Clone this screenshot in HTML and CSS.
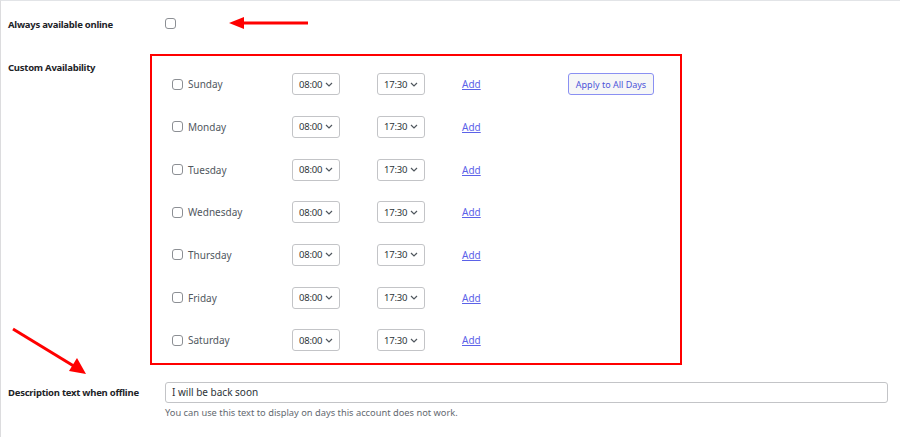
FILE: index.html
```html
<!DOCTYPE html>
<html lang="en">
<head>
    <meta charset="UTF-8">
    <title>Availability settings</title>
    <link rel="stylesheet" href="styles.css">
</head>
<body>
    <div class="panel">
        <div class="field field-online">
            <div class="label">Always available online</div>
            <div class="value"><span class="check"></span></div>
        </div>

        <div class="field field-custom">
            <div class="label">Custom Availability</div>
            <div class="value">
                <div class="days">
                    <div class="day">
                        <div class="day-name"><span class="check"></span>Sunday</div>
                        <div class="select"><span>08:00</span><svg width="8" height="5" viewBox="0 0 8 5"><path d="M1 1l3 3 3-3" fill="none" stroke="#50575e" stroke-width="1.2"/></svg></div>
                        <div class="select"><span>17:30</span><svg width="8" height="5" viewBox="0 0 8 5"><path d="M1 1l3 3 3-3" fill="none" stroke="#50575e" stroke-width="1.2"/></svg></div>
                        <div><a href="#" class="add">Add</a></div>
                        <div><button class="apply">Apply to All Days</button></div>
                    </div>
                    <div class="day">
                        <div class="day-name"><span class="check"></span>Monday</div>
                        <div class="select"><span>08:00</span><svg width="8" height="5" viewBox="0 0 8 5"><path d="M1 1l3 3 3-3" fill="none" stroke="#50575e" stroke-width="1.2"/></svg></div>
                        <div class="select"><span>17:30</span><svg width="8" height="5" viewBox="0 0 8 5"><path d="M1 1l3 3 3-3" fill="none" stroke="#50575e" stroke-width="1.2"/></svg></div>
                        <div><a href="#" class="add">Add</a></div>
                    </div>
                    <div class="day">
                        <div class="day-name"><span class="check"></span>Tuesday</div>
                        <div class="select"><span>08:00</span><svg width="8" height="5" viewBox="0 0 8 5"><path d="M1 1l3 3 3-3" fill="none" stroke="#50575e" stroke-width="1.2"/></svg></div>
                        <div class="select"><span>17:30</span><svg width="8" height="5" viewBox="0 0 8 5"><path d="M1 1l3 3 3-3" fill="none" stroke="#50575e" stroke-width="1.2"/></svg></div>
                        <div><a href="#" class="add">Add</a></div>
                    </div>
                    <div class="day">
                        <div class="day-name"><span class="check"></span>Wednesday</div>
                        <div class="select"><span>08:00</span><svg width="8" height="5" viewBox="0 0 8 5"><path d="M1 1l3 3 3-3" fill="none" stroke="#50575e" stroke-width="1.2"/></svg></div>
                        <div class="select"><span>17:30</span><svg width="8" height="5" viewBox="0 0 8 5"><path d="M1 1l3 3 3-3" fill="none" stroke="#50575e" stroke-width="1.2"/></svg></div>
                        <div><a href="#" class="add">Add</a></div>
                    </div>
                    <div class="day">
                        <div class="day-name"><span class="check"></span>Thursday</div>
                        <div class="select"><span>08:00</span><svg width="8" height="5" viewBox="0 0 8 5"><path d="M1 1l3 3 3-3" fill="none" stroke="#50575e" stroke-width="1.2"/></svg></div>
                        <div class="select"><span>17:30</span><svg width="8" height="5" viewBox="0 0 8 5"><path d="M1 1l3 3 3-3" fill="none" stroke="#50575e" stroke-width="1.2"/></svg></div>
                        <div><a href="#" class="add">Add</a></div>
                    </div>
                    <div class="day">
                        <div class="day-name"><span class="check"></span>Friday</div>
                        <div class="select"><span>08:00</span><svg width="8" height="5" viewBox="0 0 8 5"><path d="M1 1l3 3 3-3" fill="none" stroke="#50575e" stroke-width="1.2"/></svg></div>
                        <div class="select"><span>17:30</span><svg width="8" height="5" viewBox="0 0 8 5"><path d="M1 1l3 3 3-3" fill="none" stroke="#50575e" stroke-width="1.2"/></svg></div>
                        <div><a href="#" class="add">Add</a></div>
                    </div>
                    <div class="day">
                        <div class="day-name"><span class="check"></span>Saturday</div>
                        <div class="select"><span>08:00</span><svg width="8" height="5" viewBox="0 0 8 5"><path d="M1 1l3 3 3-3" fill="none" stroke="#50575e" stroke-width="1.2"/></svg></div>
                        <div class="select"><span>17:30</span><svg width="8" height="5" viewBox="0 0 8 5"><path d="M1 1l3 3 3-3" fill="none" stroke="#50575e" stroke-width="1.2"/></svg></div>
                        <div><a href="#" class="add">Add</a></div>
                    </div>
                </div>
            </div>
        </div>

        <div class="field field-offline">
            <div class="label">Description text when offline</div>
            <div class="value">
                <div class="text-input">I will be back soon</div>
                <p class="help">You can use this text to display on days this account does not work.</p>
            </div>
        </div>

        <!-- annotation arrows -->
        <svg class="arrow arrow-top" width="82" height="20" viewBox="0 0 82 20">
            <line x1="12" y1="10" x2="79" y2="10" stroke="#f00" stroke-width="3"/>
            <polygon points="0,10 15,4 15,16" fill="#f00"/>
        </svg>
        <svg class="arrow arrow-bottom" width="90" height="60" viewBox="0 0 90 60">
            <line x1="2" y1="2" x2="66" y2="41" stroke="#f00" stroke-width="3"/>
            <polygon points="75,47 58,44 66,31" fill="#f00"/>
        </svg>
    </div>
</body>
</html>
```

FILE: styles.css
```css
* { box-sizing: border-box; }
body { margin: 0; background: #fff; font-family: "Noto Sans", "Open Sans", sans-serif; font-size: 10px; color: #2c3338; }
.panel { position: relative; height: 437px; border-top: 1px solid #e2e4e7; border-left: 1px solid #dcdcde; padding-left: 7px; }

.field { display: flex; }
.label { width: 157px; flex-shrink: 0; font-weight: 700; font-size: 9.5px; letter-spacing: -0.25px; color: #1d2327; line-height: 14px; }
.value { flex: 1; }

.field-online { height: 48px; align-items: center; }
.field-custom { margin-top: 5px; }
.field-custom .label { padding-top: 7px; }
.field-offline { margin-top: 17px; }
.field-offline .label { padding-top: 4px; }

.check { display: inline-block; width: 11px; height: 11px; border: 1px solid #8c8f94; border-radius: 3px; background: #fff; }

.days { margin-left: -15px; width: 532px; height: 311px; border: 2px solid #f00; padding: 7px 0 0 20px; }
.day { display: grid; grid-template-columns: 120px 85px 85px 106px auto; align-items: center; height: 42.67px; }
.day-name { display: flex; align-items: center; gap: 5px; color: #50575e; }

.select { display: flex; align-items: center; justify-content: space-between; width: 48px; height: 22px; padding: 0 6px 0 6px; border: 1px solid #c3c4c7; border-radius: 3px; color: #2c3338; font-size: 9.5px; letter-spacing: -0.2px; }

.add { color: #5b62e8; text-decoration: underline; margin-top: -3px; }

.apply { width: 86px; height: 22px; padding: 0; border: 1px solid #8a90f2; border-radius: 3px; background: #f6f7f7; color: #4d55d9; font-family: inherit; font-size: 9px; }

.text-input { width: 723px; height: 21px; border: 1px solid #c3c4c7; border-radius: 3px; padding: 0 6px; line-height: 19px; color: #2c3338; }
.help { margin: 3px 0 0; line-height: 14px; font-size: 9.3px; color: #646970; }

.arrow { position: absolute; }
.arrow-top { left: 228px; top: 12px; }
.arrow-bottom { left: 10px; top: 326px; }
```
